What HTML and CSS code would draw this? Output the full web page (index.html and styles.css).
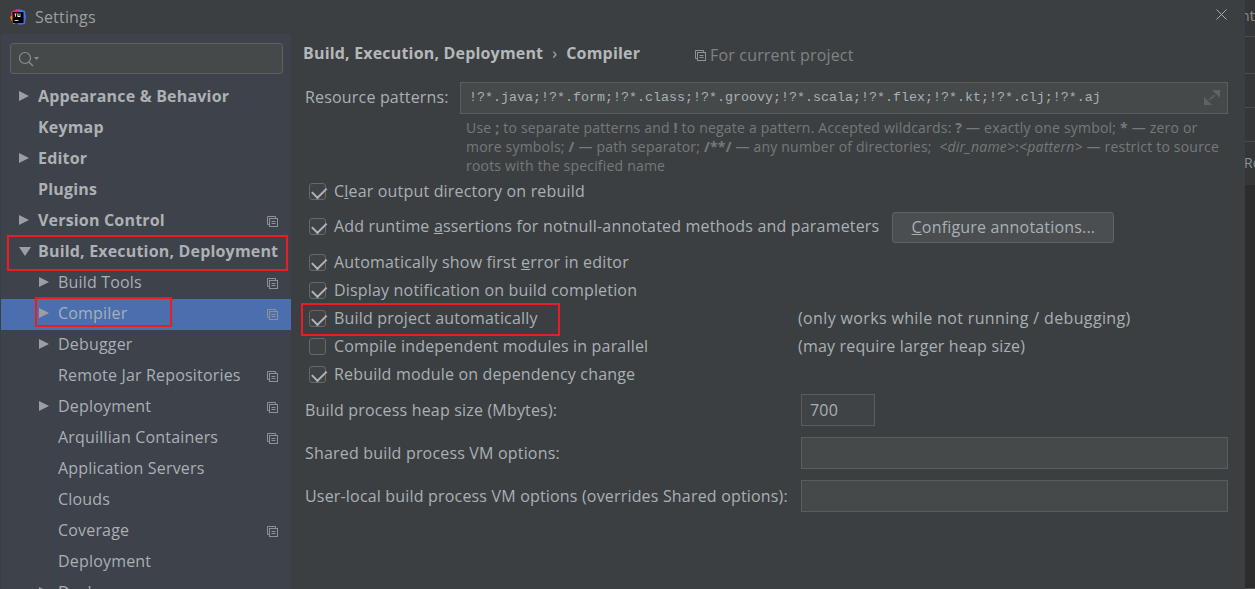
FILE: index.html
```html
<!DOCTYPE html>
<html lang="en">
<head>
<meta charset="utf-8">
<title>Settings</title>
<link rel="stylesheet" href="styles.css">
</head>
<body>
<div class="window">
  <div class="dialog">
    <header class="titlebar">
      <svg class="logo" width="16" height="16" viewBox="0 0 16 16">
        <path d="M1 3 7 0l3 2-6 8-3-1z" fill="#f0266f"/>
        <path d="M8 0l7 2 1 8-5-2z" fill="#3d7cf0"/>
        <path d="M16 9l-1 6-6 1-2-3z" fill="#5a5cf0"/>
        <path d="M0 8l3-2 3 8-3 1z" fill="#fc801d"/>
        <rect x="2.500" y="3" width="11" height="11" fill="#000"/>
        <path d="M4.500 4.500h2v.8h-.6v2.400h-.8V5.300h-.6zM7.400 4.500h1v2.600h1.200V4.500h.8v3.400H7.400z" fill="#fff"/>
        <rect x="4.500" y="11" width="4" height=".8" fill="#fff"/>
      </svg>
      <span class="title">Settings</span>
      <svg class="close" width="11" height="11" viewBox="0 0 11 11"><path d="M.5.500l10 10M10.500.500l-10 10" stroke="#a9acae" stroke-width="1" fill="none"/></svg>
    </header>
    <div class="body">
      <aside class="sidebar">
        <div class="search">
          <svg width="22" height="16" viewBox="0 0 22 16"><circle cx="7" cy="7" r="5.500" fill="none" stroke="#8b8e90" stroke-width="1.200"/><path d="M11 11l4 4" stroke="#8b8e90" stroke-width="1.300"/><path d="M16 6h5l-2.500 3z" fill="#8b8e90"/></svg>
        </div>
        <nav class="tree">
          <div class="row top"><i class="arrow"></i><b>Appearance &amp; Behavior</b></div>
          <div class="row top"><b>Keymap</b></div>
          <div class="row top"><i class="arrow"></i><b>Editor</b></div>
          <div class="row top"><b>Plugins</b></div>
          <div class="row top"><i class="arrow"></i><b>Version Control</b><svg class="copy" viewBox="0 0 11 11"><use href="#copy"/></svg></div>
          <div class="row top"><i class="arrow down"></i><b>Build, Execution, Deployment</b><span class="mark mark-build"></span></div>
          <div class="row sub"><i class="arrow"></i><span>Build Tools</span><svg class="copy" viewBox="0 0 11 11"><use href="#copy"/></svg></div>
          <div class="row sub selected"><i class="arrow"></i><span>Compiler</span><svg class="copy" viewBox="0 0 11 11"><use href="#copy"/></svg><span class="mark mark-compiler"></span></div>
          <div class="row sub"><i class="arrow"></i><span>Debugger</span></div>
          <div class="row sub"><span>Remote Jar Repositories</span><svg class="copy" viewBox="0 0 11 11"><use href="#copy"/></svg></div>
          <div class="row sub"><i class="arrow"></i><span>Deployment</span><svg class="copy" viewBox="0 0 11 11"><use href="#copy"/></svg></div>
          <div class="row sub"><span>Arquillian Containers</span><svg class="copy" viewBox="0 0 11 11"><use href="#copy"/></svg></div>
          <div class="row sub"><span>Application Servers</span></div>
          <div class="row sub"><span>Clouds</span></div>
          <div class="row sub"><span>Coverage</span><svg class="copy" viewBox="0 0 11 11"><use href="#copy"/></svg></div>
          <div class="row sub"><span>Deployment</span></div>
          <div class="row sub"><i class="arrow"></i><span>Docker</span></div>
        </nav>
      </aside>
      <main class="content">
        <div class="crumbs">
          <b>Build, Execution, Deployment</b><span class="sep">›</span><b>Compiler</b>
          <span class="scope"><svg class="copy small" viewBox="0 0 11 11"><use href="#copy"/></svg>For current project</span>
        </div>
        <div class="patterns">
          <label>Resource patterns:</label>
          <div class="field mono">!?*.java;!?*.form;!?*.class;!?*.groovy;!?*.scala;!?*.flex;!?*.kt;!?*.clj;!?*.aj
            <svg class="expand" width="16" height="16" viewBox="0 0 16 16"><path d="M8 0h8v8zM0 7v8h8z" fill="#606364"/><path d="M11 5 8 8M5 10l3-3" stroke="#606364" stroke-width="1.400"/></svg>
          </div>
        </div>
        <p class="hint">Use <b>;</b> to separate patterns and <b>!</b> to negate a pattern. Accepted wildcards: <b>?</b> — exactly one symbol; <b>*</b> — zero or more symbols; <b>/</b> — path separator; <b>/**/</b> — any number of directories; &nbsp;<em>&lt;dir_name&gt;</em>:<em>&lt;pattern&gt;</em> — restrict to source roots with the specified name</p>
        <div class="check c-clear"><i class="box on"></i><span>C<u>l</u>ear output directory on rebuild</span></div>
        <div class="check c-add"><i class="box on"></i><span>Add runtime <u>a</u>ssertions for notnull-annotated methods and parameters</span><button class="btn"><u>C</u>onfigure annotations...</button></div>
        <div class="check"><i class="box on"></i><span>Automatically show first <u>e</u>rror in editor</span></div>
        <div class="check"><i class="box on"></i><span>Display notification on build completion</span></div>
        <div class="check"><i class="box on"></i><span>Build project automatically</span><span class="note note-wide">(only works while not running / debugging)</span><span class="mark mark-auto"></span></div>
        <div class="check"><i class="box"></i><span>Compile independent modules in parallel</span><span class="note">(may require larger heap size)</span></div>
        <div class="check"><i class="box on"></i><span>Rebuild module on dependency change</span></div>
        <div class="line first"><label>Build process heap size (Mbytes):</label><div class="field heap">700</div></div>
        <div class="line"><label>Shared build process VM options:</label><div class="field wide"></div></div>
        <div class="line"><label>User-local build process VM options (overrides Shared options):</label><div class="field wide"></div></div>
      </main>
    </div>
  </div>
  <div class="behind">
    <div class="seg s1"><span class="b1">nt</span></div>
    <div class="seg s2"></div>
    <div class="seg s3"></div>
    <div class="seg s4"></div>
    <div class="seg s5"><span class="b2">Re</span></div>
    <div class="seg s6"></div>
  </div>
</div>
<svg width="0" height="0" class="defs"><defs>
  <g id="copy" fill="none" stroke="#8f9294" stroke-width="1">
    <path d="M8.500 2.500V.5h-8v8h2"/>
    <rect x="2.500" y="2.500" width="8" height="8" fill="none"/>
    <path d="M4.500 5.500h4M4.500 7.500h4"/>
  </g>
</defs></svg>
</body>
</html>
```
FILE: styles.css
```css
* { box-sizing: border-box; }
html, body { margin: 0; height: 100%; overflow: hidden; background: #2b2b2b; }
body { font-family: "Open Sans", "Noto Sans", sans-serif; font-size: 16px; letter-spacing: .18px; color: #a9b0b5; }
.defs { position: absolute; }
.window { display: flex; width: 1255px; height: 589px; overflow: hidden; }
.dialog { width: 1245px; height: 589px; background: #3c3f41; display: flex; flex-direction: column; flex: none; }
.titlebar { height: 34px; flex: none; display: flex; align-items: center; padding-left: 10px; position: relative; }
.logo { margin-right: 9px; }
.title { color: #9b9fa1; font-size: 16px; }
.close { position: absolute; right: 18px; top: 9px; }
.body { flex: 1; display: flex; min-height: 0; }
.sidebar { width: 290px; margin-left: 1px; background: #3e424a; flex: none; overflow: hidden; padding-top: 9px; }
.search { margin-left: 9px; width: 273px; height: 31px; background: #45494a; border: 1px solid #5e6162; border-radius: 3px; padding: 7px 0 0 7px; display: flex; }
.tree { margin-top: 8px; }
.row { height: 31px; display: flex; align-items: center; position: relative; white-space: nowrap; padding-bottom: 4px; }
.row b { font-weight: 700; color: #adb1b4; }
.row.top { padding-left: 37px; }
.row.sub { padding-left: 57px; }
.row.selected { background: #4b6eaf; }
.arrow { position: absolute; width: 0; height: 0; border-left: 10px solid #9c9fa1; border-top: 5.5px solid transparent; border-bottom: 5.5px solid transparent; top: 9px; left: 18px; }
.sub .arrow { left: 38px; }
.arrow.down { border-top: 9px solid #9c9fa1; border-left: 6px solid transparent; border-right: 6px solid transparent; border-bottom: 0; left: 18px; top: 10px; }
.copy { position: absolute; right: 13px; top: 10px; width: 11px; height: 11px; }
.mark { position: absolute; border: 2px solid #ed1c24; pointer-events: none; }
.mark-build { left: 6px; top: -2px; width: 281px; height: 36px; }
.mark-compiler { left: 34px; top: -2px; width: 137px; height: 30px; }
.content { flex: 1; min-width: 0; padding: 0 17px 0 12px; }
.crumbs { height: 48px; display: flex; align-items: flex-start; white-space: nowrap; position: relative; }
.crumbs b { color: #b5b8ba; line-height: 39px; }
.sep { margin: 0 9px; line-height: 38px; color: #a9b0b5; }
.scope { position: absolute; left: 392px; top: 9px; color: #7f8385; line-height: 24px; display: flex; align-items: center; }
.copy.small { position: static; margin-right: 4px; }
.patterns { display: flex; align-items: center; height: 32px; }
.patterns label { width: 157px; padding-left: 2px; padding-bottom: 2px; color: #a9b0b5; flex: none; }
.field { background: #45494a; border: 1px solid #5a5d5f; height: 32px; color: #a9b0b5; }
.field.mono { flex: 1; font-family: "Liberation Mono", monospace; font-size: 13.33px; letter-spacing: 0; line-height: 29px; padding-left: 8px; position: relative; white-space: nowrap; overflow: hidden; }
.expand { position: absolute; right: 7px; top: 7px; }
.hint { margin: 4px 0 0 163px; font-size: 14px; letter-spacing: .2px; line-height: 19px; color: #75797b; }
.hint b { font-weight: 700; }
.check { display: flex; align-items: center; height: 28px; position: relative; white-space: nowrap; padding-left: 6px; color: #a9b0b5; }
.c-clear { margin-top: 2px; }
.c-add { height: 42px; margin-bottom: 1px; }
.box { width: 17px; height: 17px; margin-right: 8px; border: 1px solid #65686a; border-radius: 3px; background: #404346; flex: none; position: relative; }
.box.on::after { content: ""; position: absolute; left: 5px; top: 0; width: 6.500px; height: 11.500px; border: solid #b0b3b5; border-width: 0 2.400px 2.400px 0; transform: rotate(45deg); }
.note { position: absolute; left: 495px; }
.note-wide { letter-spacing: .36px; }
.btn { margin: 2px 0 0 13px; width: 222px; height: 31px; background: #4a4e50; border: 1px solid #5f6365; border-radius: 3px; color: #a9b0b5; font: inherit; letter-spacing: inherit; padding: 0; }
.mark-auto { left: -2px; top: -1px; width: 259px; height: 33px; }
.line { display: flex; align-items: center; height: 32px; margin-top: 11px; white-space: nowrap; position: relative; padding-left: 2px; color: #a9b0b5; }
.line.first { margin-top: 6px; }
.line .field { position: absolute; left: 498px; }
.field.heap { width: 74px; line-height: 30px; padding-left: 8px; background: #404345; }
.field.wide { width: 427px; }
.behind { flex: 1; display: flex; flex-direction: column; background: #2d2d2d; overflow: hidden; color: #8d8f91; font-size: 14px; }
.seg { position: relative; background: #343638; border-bottom: 1px solid #4a4c4e; flex: none; }
.s1 { height: 37px; }
.s2 { height: 37px; }
.s3 { height: 34px; }
.s4 { height: 34px; }
.s5 { height: 43px; border-bottom: 0; }
.s6 { flex: 1; background: #2d2d2d; }
.b1 { position: absolute; left: -4px; top: 6px; }
.b2 { position: absolute; left: -1px; top: 11px; }
```
